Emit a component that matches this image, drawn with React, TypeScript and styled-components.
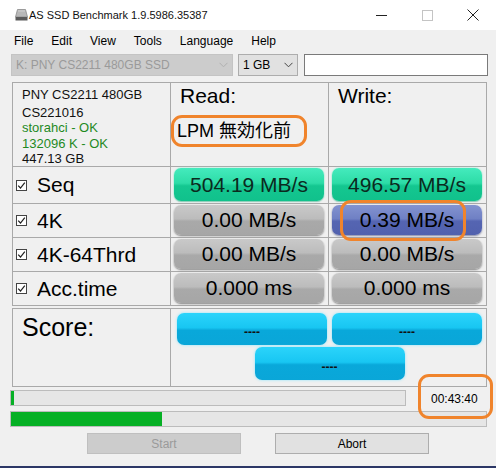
import React from 'react';
import styled, { createGlobalStyle, css } from 'styled-components';

const GlobalStyle = createGlobalStyle`
  html, body {
    margin: 0;
    padding: 0;
    background: #f0f0f0;
  }
  * {
    box-sizing: border-box;
  }
`;

const Window = styled.div`
  position: relative;
  width: 496px;
  height: 468px;
  background: #f0f0f0;
  font-family: 'Liberation Sans', Arial, sans-serif;
  color: #000;
  display: flex;
  flex-direction: column;
  overflow: hidden;
  border-bottom: 2px solid #2c3766;
`;

const TitleBar = styled.div`
  height: 30px;
  background: #fff;
  display: flex;
  align-items: center;
  padding-left: 15px;
  font-size: 11px;
  color: #111;
`;

const TitleText = styled.span`
  margin-left: 1px;
  flex: 1;
`;

const WinButton = styled.div`
  width: 46px;
  height: 30px;
  display: flex;
  align-items: center;
  justify-content: center;
`;

const MenuBar = styled.div`
  height: 22px;
  display: flex;
  align-items: center;
  padding-left: 5px;
  font-size: 12px;
`;

const MenuItem = styled.span`
  padding: 0 9px;
`;

const Toolbar = styled.div`
  height: 22px;
  margin-top: 2px;
  padding-left: 11px;
  display: flex;
  align-items: center;
  gap: 5px;
  font-size: 12px;
`;

const Combo = styled.div<{ $width: number; $disabled?: boolean }>`
  width: ${(p) => p.$width}px;
  height: 22px;
  display: flex;
  align-items: center;
  justify-content: space-between;
  padding: 0 4px 0 4px;
  border: 1px solid ${(p) => (p.$disabled ? '#c4c4c4' : '#adadad')};
  background: ${(p) => (p.$disabled ? '#cccccc' : '#e1e1e1')};
  color: ${(p) => (p.$disabled ? '#9a9a9a' : '#000')};
`;

const TextBox = styled.div`
  width: 184px;
  height: 22px;
  margin-left: 1px;
  background: #fff;
  border: 1px solid #7a7a7a;
`;

const Content = styled.div`
  padding-left: 12px;
  margin-top: 6px;
`;

const Table = styled.div<{ $rows: string }>`
  display: grid;
  grid-template-columns: 157px 157px 157px;
  grid-template-rows: ${(p) => p.$rows};
  gap: 1px;
  padding: 1px;
  background: #a9a9a9;
  width: 475px;
`;

const Cell = styled.div`
  background: #f0f0f0;
`;

const InfoCell = styled(Cell)`
  padding: 4px 0 0 9px;
  font-size: 13px;
  line-height: 15.5px;
`;

const InfoLine = styled.div<{ $green?: boolean }>`
  color: ${(p) => (p.$green ? '#1f8a1f' : '#111')};
  &:first-child {
    margin-bottom: 2px;
  }
`;

const HeaderCell = styled(Cell)`
  padding: 1px 0 0 6px;
`;

const HeaderTitle = styled.div`
  font-size: 21px;
  line-height: 24px;
  margin-left: 3px;
`;

const Note = styled.div`
  font-family: 'Liberation Sans', 'Noto Sans CJK JP', sans-serif;
  font-size: 18px;
  line-height: 22px;
  margin-top: 12px;
`;

const LabelCell = styled(Cell)`
  display: flex;
  align-items: center;
  padding-left: 3px;
  font-size: 21px;
`;

const CheckBox = styled.span`
  width: 11px;
  height: 11px;
  border: 1px solid #444;
  background: #fff;
  margin-right: 10px;
  display: flex;
  align-items: center;
  justify-content: center;
`;

const ValueCell = styled(Cell)`
  display: flex;
  padding: 1px 4px 2px 3px;
`;

type Tone = 'green' | 'grey' | 'blue' | 'score';

const tones: Record<Tone, ReturnType<typeof css>> = {
  green: css`
    background: linear-gradient(#44ebbd 0%, #2ddca7 46%, #14c790 54%, #11c18c 100%);
    box-shadow: 0 0 2px #7ff2cf, 0 1px 1px rgba(0, 120, 80, 0.4);
    color: #0b2a1e;
  `,
  grey: css`
    background: linear-gradient(#c9c9c9 0%, #bcbcbc 46%, #a9a9a9 54%, #a6a6a6 100%);
    box-shadow: 0 1px 2px rgba(0, 0, 0, 0.45);
    color: #000;
  `,
  blue: css`
    background: linear-gradient(#8393d0 0%, #6f80c4 46%, #5565b2 54%, #5161ae 100%);
    box-shadow: 0 1px 2px rgba(20, 30, 90, 0.5);
    color: #000;
  `,
  score: css`
    background: linear-gradient(#2bd4fb 0%, #18c6f2 46%, #09a8da 54%, #0aa6d8 100%);
    box-shadow: 0 0 3px #8ae6ff;
    color: #111;
  `,
};

const ValueBox = styled.div<{ $tone: Tone }>`
  flex: 1;
  border-radius: 7px;
  display: flex;
  align-items: center;
  justify-content: center;
  font-size: 21px;
  ${(p) => tones[p.$tone]}
`;

const ScoreTable = styled(Table)`
  margin-top: 2px;
`;

const ScoreLabel = styled(Cell)`
  font-size: 25px;
  line-height: 30px;
  padding: 3px 0 0 9px;
`;

const ScoreCell = styled(Cell)`
  grid-column: span 2;
  padding: 4px 3px 0 6px;
  display: grid;
  grid-template-columns: 150px 150px;
  grid-template-rows: 32px 33px;
  column-gap: 5px;
  row-gap: 2px;
`;

const ScoreButton = styled(ValueBox)<{ $center?: boolean }>`
  font-size: 12px;
  font-weight: bold;
  padding-top: 6px;
  ${(p) =>
    p.$center &&
    css`
      grid-column: span 2;
      justify-self: center;
      width: 150px;
    `}
`;

const Progress = styled.div`
  padding-left: 10px;
  margin-top: 3px;
  display: flex;
  flex-direction: column;
  gap: 5px;
`;

const ProgressRow = styled.div`
  display: flex;
  align-items: center;
`;

const Bar = styled.div<{ $width: number }>`
  width: ${(p) => p.$width}px;
  height: 16px;
  border: 1px solid #bcbcbc;
  background: #e6e6e6;
  display: flex;
`;

const Fill = styled.div`
  background: #06b025;
  height: 100%;
`;

const Time = styled.span`
  margin-left: 25px;
  font-size: 12px;
  margin-top: 1px;
`;

const Buttons = styled.div`
  display: flex;
  gap: 34px;
  padding-left: 87px;
  margin-top: 6px;
`;

const PushButton = styled.div<{ $disabled?: boolean }>`
  width: 154px;
  height: 21px;
  display: flex;
  align-items: center;
  justify-content: center;
  font-size: 12px;
  border: 1px solid ${(p) => (p.$disabled ? '#bfbfbf' : '#adadad')};
  background: ${(p) => (p.$disabled ? '#cccccc' : '#e1e1e1')};
  color: ${(p) => (p.$disabled ? '#9a9a9a' : '#000')};
`;

const Mark = styled.div`
  position: absolute;
  border: 3px solid #f0842c;
  border-radius: 11px;
  pointer-events: none;
`;

const Chevron = ({ color }: { color: string }) => (
  <svg width="9" height="6" viewBox="0 0 9 6">
    <path d="M0.5 0.8 L4.5 4.8 L8.5 0.8" fill="none" stroke={color} strokeWidth="1" />
  </svg>
);

const Check = () => (
  <svg width="9" height="9" viewBox="0 0 9 9">
    <path d="M1.2 4.6 L3.5 7 L7.8 1.6" fill="none" stroke="#222" strokeWidth="1.2" />
  </svg>
);

const DriveIcon = () => (
  <svg width="13" height="12" viewBox="0 0 13 12">
    <path d="M2.5 0.5 H10.5 L12.5 8 H0.5 Z" fill="#b8b8b8" stroke="#8a8a8a" strokeWidth="0.8" />
    <rect x="0.5" y="8" width="12" height="3.5" fill="#5a5a5a" />
    <path d="M3 2 L10 2" stroke="#d8d8d8" strokeWidth="0.8" />
  </svg>
);

const rows = [
  { label: 'Seq', read: '504.19 MB/s', write: '496.57 MB/s', readTone: 'green', writeTone: 'green' },
  { label: '4K', read: '0.00 MB/s', write: '0.39 MB/s', readTone: 'grey', writeTone: 'blue' },
  { label: '4K-64Thrd', read: '0.00 MB/s', write: '0.00 MB/s', readTone: 'grey', writeTone: 'grey' },
  { label: 'Acc.time', read: '0.000 ms', write: '0.000 ms', readTone: 'grey', writeTone: 'grey' },
] as const;

const App = () => {
  return (
    <>
      <GlobalStyle />
      <Window>
        <TitleBar>
          <DriveIcon />
          <TitleText>AS SSD Benchmark 1.9.5986.35387</TitleText>
          <WinButton>
            <svg width="11" height="1" viewBox="0 0 11 1">
              <rect width="11" height="1" fill="#222" />
            </svg>
          </WinButton>
          <WinButton>
            <svg width="11" height="11" viewBox="0 0 11 11">
              <rect x="0.5" y="0.5" width="10" height="10" fill="none" stroke="#c4c4c4" />
            </svg>
          </WinButton>
          <WinButton>
            <svg width="12" height="12" viewBox="0 0 12 12">
              <path d="M0.5 0.5 L11.5 11.5 M11.5 0.5 L0.5 11.5" stroke="#222" strokeWidth="1" />
            </svg>
          </WinButton>
        </TitleBar>

        <MenuBar>
          {['File', 'Edit', 'View', 'Tools', 'Language', 'Help'].map((m) => (
            <MenuItem key={m}>{m}</MenuItem>
          ))}
        </MenuBar>

        <Toolbar>
          <Combo $width={222} $disabled>
            <span>K: PNY CS2211 480GB SSD</span>
            <Chevron color="#b0b0b0" />
          </Combo>
          <Combo $width={60}>
            <span>1 GB</span>
            <Chevron color="#444" />
          </Combo>
          <TextBox />
        </Toolbar>

        <Content>
          <Table $rows="83px 36px 33px 33px 33px">
            <InfoCell>
              <InfoLine>PNY CS2211 480GB</InfoLine>
              <InfoLine>CS221016</InfoLine>
              <InfoLine $green>storahci - OK</InfoLine>
              <InfoLine $green>132096 K - OK</InfoLine>
              <InfoLine>447.13 GB</InfoLine>
            </InfoCell>
            <HeaderCell>
              <HeaderTitle>Read:</HeaderTitle>
              <Note>LPM 無効化前</Note>
            </HeaderCell>
            <HeaderCell>
              <HeaderTitle>Write:</HeaderTitle>
            </HeaderCell>

            {rows.map((r) => (
              <React.Fragment key={r.label}>
                <LabelCell>
                  <CheckBox>
                    <Check />
                  </CheckBox>
                  {r.label}
                </LabelCell>
                <ValueCell>
                  <ValueBox $tone={r.readTone}>{r.read}</ValueBox>
                </ValueCell>
                <ValueCell>
                  <ValueBox $tone={r.writeTone}>{r.write}</ValueBox>
                </ValueCell>
              </React.Fragment>
            ))}
          </Table>

          <ScoreTable $rows="77px">
            <ScoreLabel>Score:</ScoreLabel>
            <ScoreCell>
              <ScoreButton $tone="score">----</ScoreButton>
              <ScoreButton $tone="score">----</ScoreButton>
              <ScoreButton $tone="score" $center>
                ----
              </ScoreButton>
            </ScoreCell>
          </ScoreTable>
        </Content>

        <Progress>
          <ProgressRow>
            <Bar $width={396}>
              <Fill style={{ width: 3 }} />
            </Bar>
            <Time>00:43:40</Time>
          </ProgressRow>
          <Bar $width={477}>
            <Fill style={{ width: 151 }} />
          </Bar>
        </Progress>

        <Buttons>
          <PushButton $disabled>Start</PushButton>
          <PushButton>Abort</PushButton>
        </Buttons>

        <Mark style={{ left: 171, top: 115, width: 136, height: 32 }} />
        <Mark style={{ left: 340, top: 200, width: 126, height: 41 }} />
        <Mark style={{ left: 418, top: 374, width: 75, height: 45 }} />
      </Window>
    </>
  );
};

export default App;
